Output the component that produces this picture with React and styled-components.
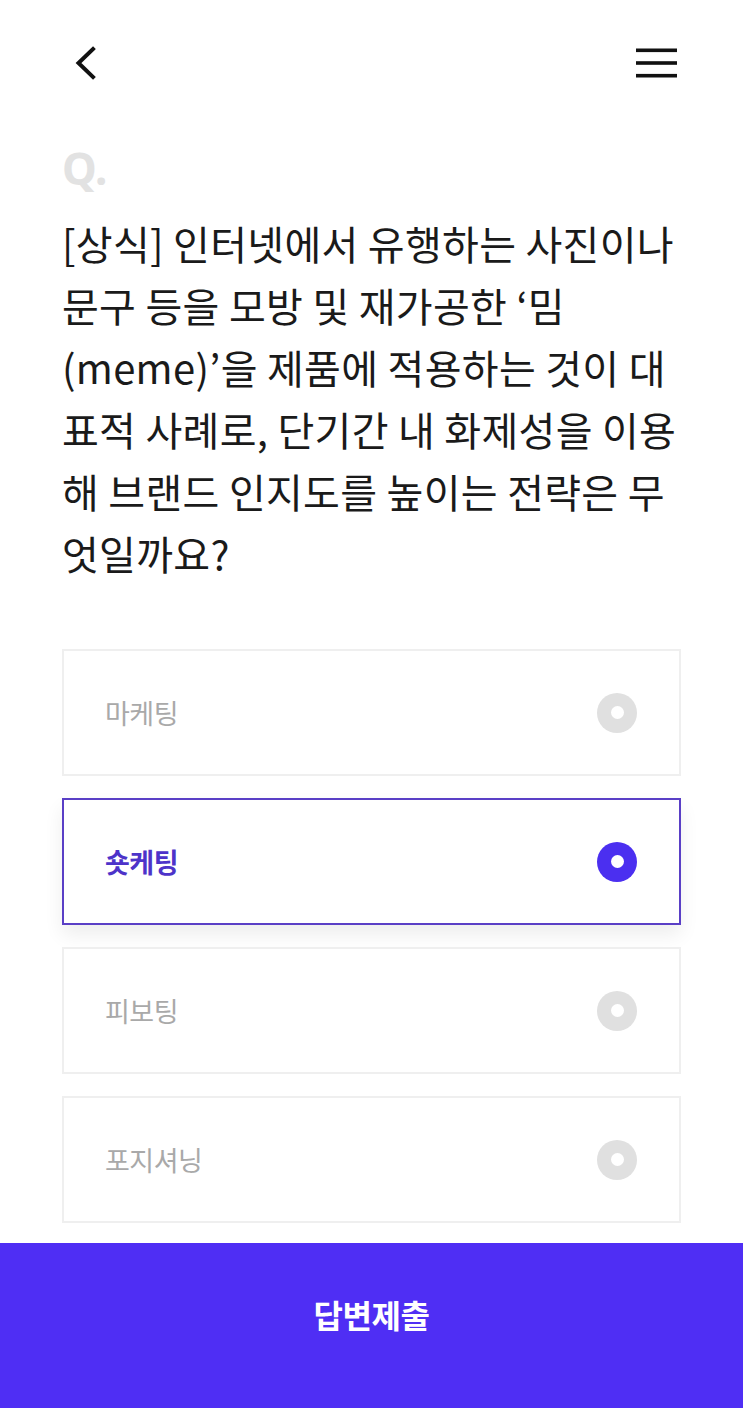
import React from "react";
import styled, { createGlobalStyle } from "styled-components";

const Global = createGlobalStyle`
  html, body { margin: 0; padding: 0; background: #ffffff; }
  body { font-family: "Noto Sans CJK KR", "Noto Sans", sans-serif; }
  * { box-sizing: border-box; }
`;

const Page = styled.div`
  min-height: 1408px;
  display: flex;
  flex-direction: column;
  background: #ffffff;
`;

const Header = styled.header`
  height: 126px;
  display: flex;
  align-items: center;
  justify-content: space-between;
  padding: 0 64px 0 66px;
`;

const IconButton = styled.button`
  border: 0;
  background: none;
  padding: 0;
  display: flex;
  cursor: pointer;
`;

const Body = styled.main`
  padding: 0 62px;
  display: flex;
  flex-direction: column;
`;

const QMark = styled.div`
  font-family: "Noto Sans", "Roboto", sans-serif;
  font-weight: 700;
  font-size: 44px;
  line-height: 44px;
  color: #e2e2e2;
  margin-top: 20px;
`;

const Question = styled.h1`
  margin: 22px 0 0;
  font-family: "Noto Sans CJK KR", sans-serif;
  font-weight: 400;
  font-size: 40px;
  line-height: 62px;
  letter-spacing: 0.3px;
  color: #1a1a1a;
  white-space: nowrap;
`;

const Options = styled.div`
  margin-top: 65px;
  display: flex;
  flex-direction: column;
  gap: 22px;
`;

const Option = styled.label`
  height: 127px;
  display: flex;
  align-items: center;
  justify-content: space-between;
  padding: 0 42px 0 41px;
  background: #ffffff;
  border: 2px solid ${(p) => (p.$selected ? "#5a3fc6" : "#efefef")};
  box-shadow: ${(p) => (p.$selected ? "0 10px 18px rgba(0,0,0,0.07)" : "none")};
  cursor: pointer;
`;

const OptionText = styled.span`
  font-size: 27px;
  font-weight: ${(p) => (p.$selected ? 700 : 400)};
  color: ${(p) => (p.$selected ? "#4d33c9" : "#a9a9a9")};
  letter-spacing: -0.5px;
`;

const Radio = styled.span`
  width: 40px;
  height: 40px;
  border-radius: 50%;
  background: ${(p) => (p.$selected ? "#4b2ff0" : "#e0e0e0")};
  display: flex;
  align-items: center;
  justify-content: center;
  &::after {
    content: "";
    width: 13px;
    height: 13px;
    border-radius: 50%;
    background: #ffffff;
  }
`;

const Submit = styled.button`
  margin-top: auto;
  height: 165px;
  width: 100%;
  border: 0;
  padding: 0 0 24px;
  background: #4f2ef4;
  color: #ffffff;
  font-family: "Noto Sans CJK KR", sans-serif;
  font-weight: 700;
  font-size: 32px;
  letter-spacing: -0.5px;
  cursor: pointer;
`;

const options = ["마케팅", "숏케팅", "피보팅", "포지셔닝"];

export default function App() {
  const selected = 1;
  return (
    <Page>
      <Global />
      <Header>
        <IconButton aria-label="back">
          <svg width="40" height="40" viewBox="0 0 40 40" fill="none">
            <path d="M27 6 L12.5 20 L27 34" stroke="#111" strokeWidth="4" strokeLinecap="square" strokeLinejoin="miter" />
          </svg>
        </IconButton>
        <IconButton aria-label="menu">
          <svg width="44" height="40" viewBox="0 0 44 40" fill="none">
            <rect x="1" y="5.5" width="41" height="3.6" fill="#111" />
            <rect x="1" y="18.2" width="41" height="3.6" fill="#111" />
            <rect x="1" y="30.9" width="41" height="3.6" fill="#111" />
          </svg>
        </IconButton>
      </Header>
      <Body>
        <QMark>Q.</QMark>
        <Question>
          [상식] 인터넷에서 유행하는 사진이나
          <br />
          문구 등을 모방 및 재가공한 ‘밈
          <br />
          (meme)’을 제품에 적용하는 것이 대
          <br />
          표적 사례로, 단기간 내 화제성을 이용
          <br />
          해 브랜드 인지도를 높이는 전략은 무
          <br />
          엇일까요?
        </Question>
        <Options>
          {options.map((o, i) => (
            <Option key={o} $selected={i === selected}>
              <OptionText $selected={i === selected}>{o}</OptionText>
              <Radio $selected={i === selected} />
            </Option>
          ))}
        </Options>
      </Body>
      <Submit>답변제출</Submit>
    </Page>
  );
}
